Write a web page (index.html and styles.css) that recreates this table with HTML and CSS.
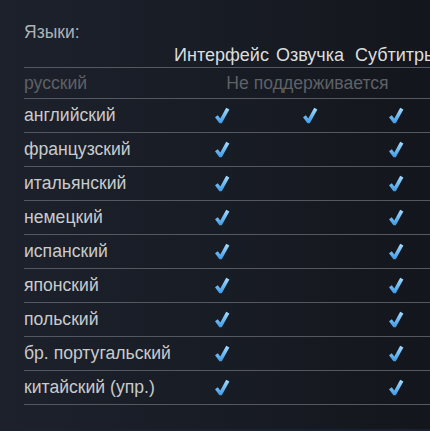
FILE: index.html
```html
<!DOCTYPE html>
<html lang="ru">
<head>
<meta charset="utf-8">
<link rel="stylesheet" href="styles.css">
</head>
<body>
<svg width="0" height="0" class="defs">
  <defs>
    <linearGradient id="chk" x1="0" y1="0" x2="0" y2="1">
      <stop offset="0" stop-color="#a6dcff"/>
      <stop offset="1" stop-color="#3d9be6"/>
    </linearGradient>
    <symbol id="check" viewBox="0 0 16 17">
      <path d="M1 10.2 L3.8 8.2 L6.3 11.4 L12.2 0.8 L15.4 2.6 L7.8 16.2 L5.4 16.2 Z" fill="url(#chk)"/>
    </symbol>
  </defs>
</svg>
<div class="panel">
  <div class="title">Языки:</div>
  <div class="langs">
    <div class="row head">
      <div class="name"></div>
      <div class="col">Интерфейс</div>
      <div class="col">Озвучка</div>
      <div class="col">Субтитры</div>
    </div>
    <div class="row unsupported">
      <div class="name">русский</div>
      <div class="span3">Не поддерживается</div>
    </div>
    <div class="row">
      <div class="name">английский</div>
      <div class="col"><svg class="ck"><use href="#check"/></svg></div>
      <div class="col"><svg class="ck"><use href="#check"/></svg></div>
      <div class="col"><svg class="ck"><use href="#check"/></svg></div>
    </div>
    <div class="row">
      <div class="name">французский</div>
      <div class="col"><svg class="ck"><use href="#check"/></svg></div>
      <div class="col"></div>
      <div class="col"><svg class="ck"><use href="#check"/></svg></div>
    </div>
    <div class="row">
      <div class="name">итальянский</div>
      <div class="col"><svg class="ck"><use href="#check"/></svg></div>
      <div class="col"></div>
      <div class="col"><svg class="ck"><use href="#check"/></svg></div>
    </div>
    <div class="row">
      <div class="name">немецкий</div>
      <div class="col"><svg class="ck"><use href="#check"/></svg></div>
      <div class="col"></div>
      <div class="col"><svg class="ck"><use href="#check"/></svg></div>
    </div>
    <div class="row">
      <div class="name">испанский</div>
      <div class="col"><svg class="ck"><use href="#check"/></svg></div>
      <div class="col"></div>
      <div class="col"><svg class="ck"><use href="#check"/></svg></div>
    </div>
    <div class="row">
      <div class="name">японский</div>
      <div class="col"><svg class="ck"><use href="#check"/></svg></div>
      <div class="col"></div>
      <div class="col"><svg class="ck"><use href="#check"/></svg></div>
    </div>
    <div class="row">
      <div class="name">польский</div>
      <div class="col"><svg class="ck"><use href="#check"/></svg></div>
      <div class="col"></div>
      <div class="col"><svg class="ck"><use href="#check"/></svg></div>
    </div>
    <div class="row">
      <div class="name">бр. португальский</div>
      <div class="col"><svg class="ck"><use href="#check"/></svg></div>
      <div class="col"></div>
      <div class="col"><svg class="ck"><use href="#check"/></svg></div>
    </div>
    <div class="row">
      <div class="name">китайский (упр.)</div>
      <div class="col"><svg class="ck"><use href="#check"/></svg></div>
      <div class="col"></div>
      <div class="col"><svg class="ck"><use href="#check"/></svg></div>
    </div>
  </div>
</div>
<div class="strip"></div>
</body>
</html>
```
FILE: styles.css
```css
html, body {
  margin: 0;
  padding: 0;
  width: 430px;
  height: 431px;
  overflow: hidden;
  background: #14171e;
}
.defs {
  position: absolute;
  width: 0;
  height: 0;
}
.panel {
  height: 429px;
  box-sizing: border-box;
  padding: 22px 0 0 24px;
  background: linear-gradient(to right, #1c212b 0%, #181c25 50%, #13161c 100%);
  font-family: "Liberation Sans", Arial, sans-serif;
  overflow: hidden;
}
.strip {
  height: 2px;
  background: #1b212d;
}
.title {
  font-size: 17.5px;
  line-height: 20px;
  color: #acb2b8;
}
.langs {
  width: 430px;
}
.row {
  display: grid;
  grid-template-columns: 150px 95px 82px 90px;
  align-items: center;
  height: 33px;
  border-bottom: 1px solid #55595f;
  font-size: 17.6px;
  color: #c9cbcd;
}
.row.head {
  height: 25px;
  align-items: end;
  color: #dcdedf;
  font-size: 18px;
}
.row.head .col {
  line-height: 20px;
  padding-bottom: 2px;
}
.row.unsupported {
  height: 30px;
  color: #5e6166;
}
.span3 {
  grid-column: 2 / span 3;
  text-align: center;
}
.col {
  text-align: center;
  white-space: nowrap;
}
.name {
  white-space: nowrap;
}
.ck {
  display: block;
  margin: 0 auto;
  width: 16px;
  height: 17px;
}
```
